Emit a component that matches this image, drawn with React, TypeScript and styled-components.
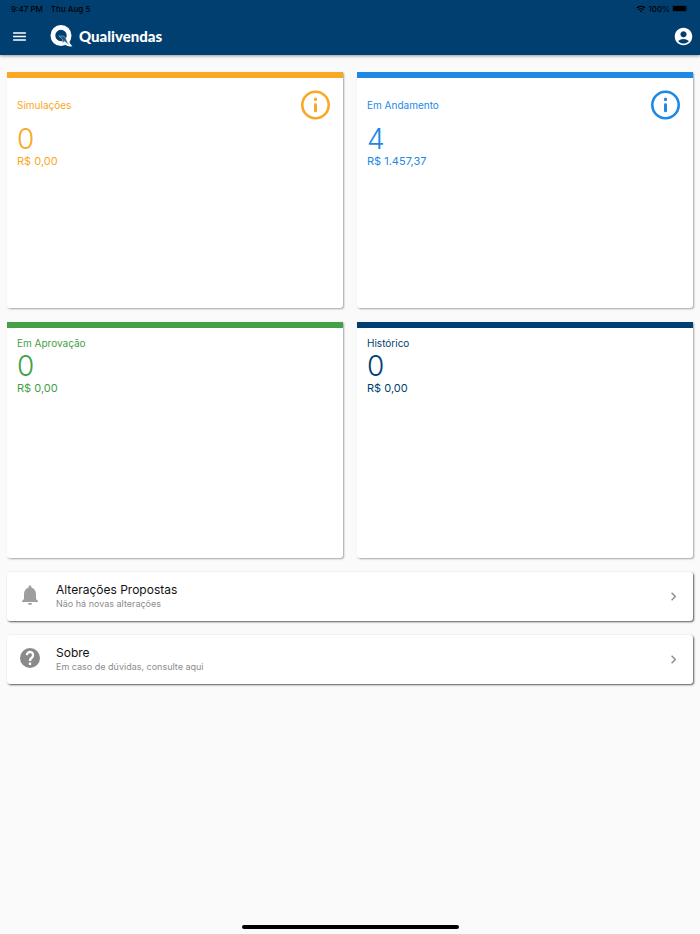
import React from "react";
import styled, { createGlobalStyle } from "styled-components";
import {
  MdAccountCircle,
  MdChevronRight,
  MdMenu,
  MdNotifications,
  MdWifi,
} from "react-icons/md";

const GlobalStyle = createGlobalStyle`
  *, *::before, *::after { box-sizing: border-box; }
  body {
    margin: 0;
    background: #fafafa;
    font-family: Inter, "Liberation Sans", sans-serif;
  }
  button { font: inherit; color: inherit; }
`;

const Page = styled.div`
  display: flex;
  flex-direction: column;
  min-height: 100vh;
`;

const Header = styled.header`
  background: #003f70;
  color: #fff;
  box-shadow: 0 1px 3px rgba(0, 0, 0, 0.4);
`;

const StatusBar = styled.div`
  display: flex;
  align-items: center;
  justify-content: space-between;
  height: 17px;
  padding: 0 11px;
  font-size: 8px;
  font-weight: 500;
  color: #000;
`;

const StatusGroup = styled.div<{ $gap: number }>`
  display: flex;
  align-items: center;
  gap: ${({ $gap }) => $gap}px;
`;

const Toolbar = styled.div`
  display: flex;
  align-items: center;
  height: 38px;
  padding: 0 6px 0 11px;
`;

const IconButton = styled.button`
  display: flex;
  flex: none;
  padding: 0;
  border: 0;
  background: none;
  cursor: pointer;
`;

const Brand = styled.h1`
  display: flex;
  flex: 1;
  align-items: center;
  gap: 6px;
  margin: 0 0 0 22px;
  font-family: Lato, sans-serif;
  font-size: 15px;
  font-weight: 900;
`;

const Content = styled.main`
  display: flex;
  flex: 1;
  flex-direction: column;
  gap: 14px;
  padding: 17px 7px;
`;

const CardGrid = styled.section`
  display: grid;
  grid-template-columns: 1fr 1fr;
  gap: 14px;
`;

const Card = styled.article<{ $color: string }>`
  aspect-ratio: 336 / 236;
  padding: 9px 10px;
  border-top: 6px solid ${({ $color }) => $color};
  border-radius: 0 0 3px 3px;
  background: #fff;
  color: ${({ $color }) => $color};
  box-shadow: 1px 1px 2px rgba(0, 0, 0, 0.35);
`;

const CardHead = styled.div`
  display: flex;
  align-items: center;
  justify-content: space-between;
`;

const CardTitle = styled.h2`
  margin: 0;
  font-size: 10px;
  font-weight: 400;
  line-height: 12px;
`;

const Count = styled.div`
  font-size: 28px;
  font-weight: 300;
  line-height: 34px;
`;

const Amount = styled.div`
  font-size: 11px;
  line-height: 10px;
`;

const RowCard = styled.button`
  display: flex;
  align-items: center;
  width: 100%;
  padding: 9px 11px;
  border: 0;
  border-radius: 3px;
  background: #fff;
  text-align: left;
  color: #8c8c8c;
  cursor: pointer;
  box-shadow: 1px 1px 2px rgba(0, 0, 0, 0.65);
`;

const RowIcon = styled.span`
  display: flex;
  padding-bottom: 3px;
`;

const RowText = styled.span`
  display: flex;
  flex: 1;
  flex-direction: column;
  padding: 1px 0 2px;
  margin-left: 14px;
`;

const RowTitle = styled.span`
  font-size: 12px;
  line-height: 16px;
  color: #111;
`;

const RowNote = styled.span`
  font-size: 9px;
  line-height: 12px;
`;

const HomeBar = styled.div`
  align-self: center;
  width: 31%;
  height: 4px;
  margin-bottom: 5px;
  border-radius: 2px;
  background: #000;
`;

const BrandMark = () => (
  <svg width="23" height="22" viewBox="0 0 23 22" aria-hidden="true">
    <circle cx="11" cy="10.5" r="8.1" fill="none" stroke="#fff" strokeWidth="4.8" />
    <path d="M13 14 L19 14 Q19 18.5 22.5 21.3 Q17 22 14 18.5 Z" fill="#fff" />
    <path
      d="M8.8 11 L13.5 11.2 Q16 12 16.3 15 L18.5 19.5 L14.6 16.2 L12.6 17.6 L12.6 14.4 Z"
      fill="#1d547f"
      stroke="#a9bfd0"
      strokeWidth="0.6"
      strokeLinejoin="round"
    />
  </svg>
);

const Battery = () => (
  <svg width="17" height="7" viewBox="0 0 17 7" aria-hidden="true">
    <rect x="0.25" y="0.25" width="14.5" height="6.5" rx="1.8" fill="none" stroke="#000" strokeOpacity="0.5" strokeWidth="0.5" />
    <rect x="1" y="1" width="13" height="5" rx="1" />
    <path d="M15.6 2.3 Q17 3.5 15.6 4.7 Z" fillOpacity="0.5" />
  </svg>
);

const InfoIcon = () => (
  <svg width="35" height="35" viewBox="0 0 35 35" fill="currentColor" aria-hidden="true">
    <circle cx="17.5" cy="18" r="13.2" fill="none" stroke="currentColor" strokeWidth="2.6" />
    <rect x="16" y="10.7" width="3" height="3.2" rx="1" />
    <rect x="16" y="16.3" width="3" height="9" rx="1.4" />
  </svg>
);

const HelpIcon = ({ size, color }: { size: number; color: string }) => (
  <svg width={size} height={size} viewBox="0 0 24 24" aria-hidden="true">
    <circle cx="12" cy="12" r="10" fill={color} />
    <path
      d="M8.9 9.3 A3.1 3.1 0 1 1 14.3 11.2 C13 12.3 12 12.9 12 15"
      fill="none"
      stroke="#fff"
      strokeWidth="2.3"
    />
    <rect x="10.8" y="16.6" width="2.4" height="2.4" rx="0.4" fill="#fff" />
  </svg>
);

const cards = [
  { title: "Simulações", count: 0, amount: "R$ 0,00", color: "#f9a826", info: true },
  { title: "Em Andamento", count: 4, amount: "R$ 1.457,37", color: "#1e88e5", info: true },
  { title: "Em Aprovação", count: 0, amount: "R$ 0,00", color: "#43a047", info: false },
  { title: "Histórico", count: 0, amount: "R$ 0,00", color: "#003f70", info: false },
];

const rows = [
  { title: "Alterações Propostas", note: "Não há novas alterações", Icon: MdNotifications, tone: "#9e9e9e" },
  { title: "Sobre", note: "Em caso de dúvidas, consulte aqui", Icon: HelpIcon, tone: "#8a8a8a" },
];

export default function App() {
  return (
    <Page>
      <GlobalStyle />
      <Header>
        <StatusBar>
          <StatusGroup $gap={8}>
            <span>9:47 PM</span>
            <span>Thu Aug 5</span>
          </StatusGroup>
          <StatusGroup $gap={2}>
            <MdWifi size={10} />
            <span>100%</span>
            <Battery />
          </StatusGroup>
        </StatusBar>
        <Toolbar>
          <IconButton aria-label="Menu">
            <MdMenu size={17} />
          </IconButton>
          <Brand>
            <BrandMark />
            Qualivendas
          </Brand>
          <IconButton aria-label="Conta">
            <MdAccountCircle size={21} />
          </IconButton>
        </Toolbar>
      </Header>
      <Content>
        <CardGrid>
          {cards.map(({ title, count, amount, color, info }) => (
            <Card key={title} $color={color}>
              <CardHead>
                <CardTitle>{title}</CardTitle>
                {info && (
                  <IconButton aria-label={`Informações: ${title}`}>
                    <InfoIcon />
                  </IconButton>
                )}
              </CardHead>
              <Count>{count}</Count>
              <Amount>{amount}</Amount>
            </Card>
          ))}
        </CardGrid>
        {rows.map(({ title, note, Icon, tone }) => (
          <RowCard key={title}>
            <RowIcon>
              <Icon size={24} color={tone} />
            </RowIcon>
            <RowText>
              <RowTitle>{title}</RowTitle>
              <RowNote>{note}</RowNote>
            </RowText>
            <MdChevronRight size={17} />
          </RowCard>
        ))}
      </Content>
      <HomeBar />
    </Page>
  );
}
